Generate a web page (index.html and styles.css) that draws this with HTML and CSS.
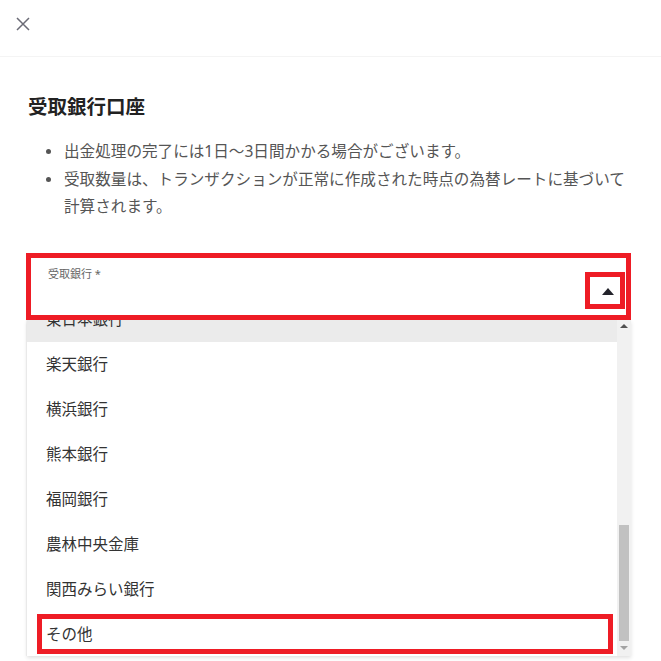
FILE: index.html
```html
<!DOCTYPE html>
<html lang="ja">
<head>
<meta charset="utf-8">
<link rel="stylesheet" href="styles.css">
</head>
<body>
<header class="topbar">
  <svg class="close" width="14" height="14" viewBox="0 0 14 14"><path d="M1 1L13 13M13 1L1 13" stroke="#6b6b76" stroke-width="1.5" fill="none"/></svg>
</header>
<main class="content">
  <h1 class="title">受取銀行口座</h1>
  <ul class="notes">
    <li>出金処理の完了には1日～3日間かかる場合がございます。</li>
    <li>受取数量は、トランザクションが正常に作成された時点の為替レートに基づいて計算されます。</li>
  </ul>
  <div class="field">
    <span class="label">受取銀行 *</span>
    <span class="arrow"></span>
    <span class="mark mark-field"></span>
    <span class="mark mark-arrow"></span>
  </div>
  <div class="dropdown">
    <div class="options">
      <div class="opt active">東日本銀行</div>
      <div class="opt">楽天銀行</div>
      <div class="opt">横浜銀行</div>
      <div class="opt">熊本銀行</div>
      <div class="opt">福岡銀行</div>
      <div class="opt">農林中央金庫</div>
      <div class="opt">関西みらい銀行</div>
      <div class="opt">その他</div>
    </div>
    <div class="scrollbar">
      <span class="sb-up"></span>
      <span class="sb-thumb"></span>
      <span class="sb-down"></span>
    </div>
    <span class="mark mark-other"></span>
  </div>
</main>
</body>
</html>
```
FILE: styles.css
```css
* { box-sizing: border-box; }
html, body { margin: 0; padding: 0; background: #fff; }
body {
  font-family: "Noto Sans", "Noto Sans CJK JP", sans-serif;
  color: #333;
  width: 661px;
  height: 661px;
  overflow: hidden;
}
.topbar {
  height: 57px;
  border-bottom: 1px solid #f4f4f4;
  display: flex;
  align-items: flex-start;
  padding: 17px 0 0 16px;
}
.close { display: block; }
.title {
  margin: 0;
  padding: 37px 0 0 28px;
  font-size: 19.5px;
  line-height: 26px;
  font-weight: 700;
  color: #222;
}
.notes {
  list-style: none;
  margin: 18px 0 0 0;
  padding: 0 25px 0 64px;
  font-size: 15.6px;
  line-height: 27.5px;
  color: #555;
}
.notes li { position: relative; }
.notes li::before {
  content: "";
  position: absolute;
  left: -18px;
  top: 11px;
  width: 5px;
  height: 5px;
  border-radius: 50%;
  background: #555;
}
.field {
  position: relative;
  margin: 32px 0 0 26px;
  width: 605px;
  height: 67px;
  padding: 14px 0 0 22px;
}
.label {
  display: block;
  font-size: 11px;
  line-height: 14px;
  color: #666;
}
.arrow {
  position: absolute;
  left: 576px;
  top: 35px;
  width: 0;
  height: 0;
  border-left: 6.5px solid transparent;
  border-right: 6.5px solid transparent;
  border-bottom: 7px solid #23232b;
}
.mark {
  position: absolute;
  border: 5px solid #ee1c25;
  z-index: 5;
}
.mark-field { left: 0; top: 0; width: 605px; height: 67px; }
.mark-arrow { left: 559px; top: 19px; width: 40px; height: 37px; }
.dropdown {
  position: relative;
  margin-left: 27px;
  width: 604px;
  height: 336px;
  display: grid;
  grid-template-columns: 1fr 14px;
  background: #fff;
  box-shadow: 0 2px 4px rgba(0,0,0,0.12), -1px 0 1px rgba(0,0,0,0.04);
}
.options { overflow: hidden; }
.opt {
  height: 45px;
  line-height: 45px;
  padding-left: 19px;
  font-size: 15.5px;
  color: #333;
}
.opt.active {
  background: #ebebeb;
  margin-top: -23px;
}
.scrollbar {
  position: relative;
  background: #f1f1f1;
}
.sb-up {
  position: absolute;
  left: 3px;
  top: 4px;
  border-left: 4px solid transparent;
  border-right: 4px solid transparent;
  border-bottom: 4px solid #505050;
}
.sb-down {
  position: absolute;
  left: 3px;
  bottom: 6px;
  border-left: 4px solid transparent;
  border-right: 4px solid transparent;
  border-top: 4px solid #a3a3a3;
}
.sb-thumb {
  position: absolute;
  left: 2px;
  right: 2px;
  top: 205px;
  height: 116px;
  background: #c1c1c1;
}
.mark-other { left: 10px; top: 294px; width: 576px; height: 40px; }
```
